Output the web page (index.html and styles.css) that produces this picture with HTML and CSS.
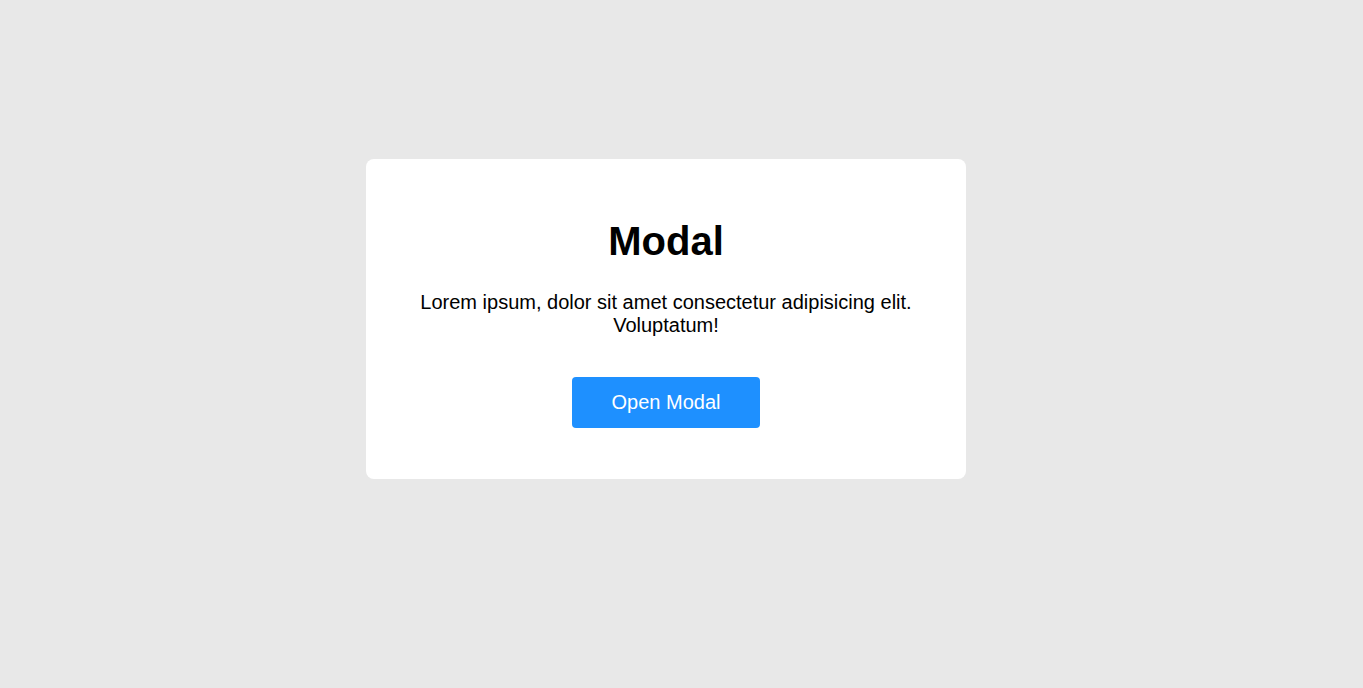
FILE: index.html
```html
<!DOCTYPE html>
<html lang="en">
<head>
<meta charset="utf-8">
<title>Modal</title>
<link rel="stylesheet" href="styles.css">
</head>
<body>
<main class="page">
  <section class="card">
    <h1 class="card-title">Modal</h1>
    <p class="card-text">Lorem ipsum, dolor sit amet consectetur adipisicing elit. Voluptatum!</p>
    <button class="btn" type="button">Open Modal</button>
  </section>
</main>
</body>
</html>
```
FILE: styles.css
```css
html, body {
  margin: 0;
  padding: 0;
}
body {
  background: #e8e8e8;
  font-family: "Liberation Sans", Arial, sans-serif;
  color: #000;
}
.page {
  display: flex;
  justify-content: center;
  padding-top: 159px;
  padding-right: 31px;
}
.card {
  width: 600px;
  box-sizing: border-box;
  background: #fff;
  border-radius: 8px;
  padding: 59px 50px 51px;
  display: flex;
  flex-direction: column;
  align-items: center;
  text-align: center;
}
.card-title {
  margin: 0 0 27px;
  font-size: 40px;
  font-weight: 700;
  line-height: 46px;
}
.card-text {
  margin: 0 0 40px;
  font-size: 20px;
  line-height: 23px;
}
.btn {
  font-family: inherit;
  font-size: 20px;
  line-height: 23px;
  color: #fff;
  background: #1e90ff;
  border: none;
  border-radius: 4px;
  padding: 14px 40px;
  white-space: nowrap;
  cursor: pointer;
}
```
